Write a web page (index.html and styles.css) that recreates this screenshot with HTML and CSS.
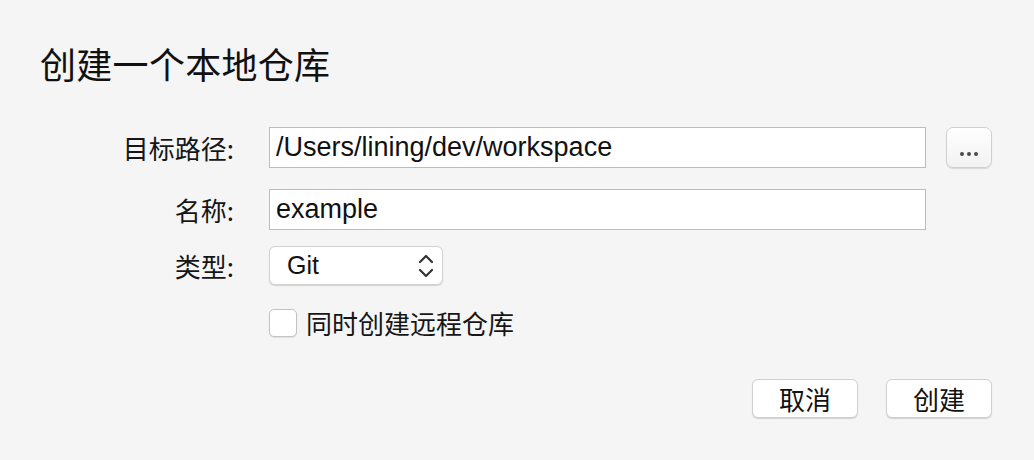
FILE: index.html
```html
<!DOCTYPE html>
<html lang="zh-CN">
<head>
<meta charset="utf-8">
<title>创建一个本地仓库</title>
<link rel="stylesheet" href="styles.css">
</head>
<body>
<div class="dialog">
  <h1 class="title">创建一个本地仓库</h1>
  <div class="form">
    <label class="label row1">目标路径:</label>
    <div class="field row1"><span class="value">/Users/lining/dev/workspace</span></div>
    <button class="browse row1" type="button" aria-label="浏览"><span class="dot"></span><span class="dot"></span><span class="dot"></span></button>

    <label class="label row2">名称:</label>
    <div class="field row2"><span class="value">example</span></div>

    <label class="label row3">类型:</label>
    <div class="select row3">
      <span class="value">Git</span>
      <svg class="chev" width="16" height="24" viewBox="0 0 16 24"><path d="M2 8 L8 2 L14 8" fill="none" stroke="#333" stroke-width="2.2" stroke-linecap="round" stroke-linejoin="round"/><path d="M2 16 L8 22 L14 16" fill="none" stroke="#333" stroke-width="2.2" stroke-linecap="round" stroke-linejoin="round"/></svg>
    </div>

    <div class="check row4">
      <span class="box"></span>
      <span class="check-label">同时创建远程仓库</span>
    </div>
  </div>
  <div class="actions">
    <button class="btn" type="button">取消</button>
    <button class="btn" type="button">创建</button>
  </div>
</div>
</body>
</html>
```
FILE: styles.css
```css
html, body {
  margin: 0;
  padding: 0;
  background: #f5f5f5;
}
body {
  font-family: "Liberation Sans", "Noto Sans CJK SC", sans-serif;
  color: #1a1a1a;
  width: 1034px;
  height: 460px;
  overflow: hidden;
}
.dialog {
  padding: 38px 0 0 40px;
}
.title {
  margin: 0;
  font-family: "Noto Sans CJK SC", sans-serif;
  font-weight: 400;
  font-size: 36px;
  line-height: 50px;
  letter-spacing: 0.3px;
  color: #111;
}
.form {
  display: grid;
  grid-template-columns: 194px 657px 46px;
  column-gap: 35px;
  margin-top: 39px;
  align-items: center;
}
.form .browse { margin-left: -15px; }
.label {
  grid-column: 1;
  justify-self: end;
  font-family: "Noto Sans CJK SC", sans-serif;
  font-size: 26px;
  line-height: 30px;
  color: #161616;
}
.row1 { grid-row: 1; }
.row2 { grid-row: 2; margin-top: 21px; }
.row3 { grid-row: 3; margin-top: 16px; }
.row4 { grid-row: 4; margin-top: 25px; }
.field {
  grid-column: 2;
  box-sizing: border-box;
  height: 41px;
  background: #fff;
  border: 1px solid #bcbcbc;
  display: flex;
  align-items: center;
  padding-left: 6px;
  font-size: 27px;
  color: #111;
}
.browse {
  grid-column: 3;
  box-sizing: border-box;
  width: 46px;
  height: 41px;
  border: 1px solid #d0d0d0;
  border-radius: 7px;
  background: linear-gradient(#ffffff, #f2f2f2);
  box-shadow: 0 1px 1px rgba(0,0,0,0.12);
  display: flex;
  justify-content: center;
  align-items: flex-end;
  gap: 3px;
  padding: 0 0 11px;
}
.dot {
  width: 4px;
  height: 4px;
  border-radius: 50%;
  background: #4a4a4a;
}
.select {
  grid-column: 2;
  justify-self: start;
  box-sizing: border-box;
  width: 174px;
  height: 39px;
  background: #fff;
  border: 1px solid #d2d2d2;
  border-radius: 6px;
  box-shadow: 0 1px 1px rgba(0,0,0,0.15);
  display: flex;
  align-items: center;
  justify-content: space-between;
  padding: 0 8px 0 17px;
  font-size: 25px;
  color: #111;
}
.chev { display: block; }
.check {
  grid-column: 2;
  display: flex;
  align-items: center;
  gap: 9px;
  height: 30px;
}
.row4.check { margin-top: 23px; }
.box {
  box-sizing: border-box;
  width: 28px;
  height: 28px;
  background: #fff;
  border: 1px solid #c2c2c2;
  border-radius: 5px;
  box-shadow: 0 1px 1px rgba(0,0,0,0.08);
}
.check-label {
  font-family: "Noto Sans CJK SC", sans-serif;
  font-size: 26px;
  line-height: 30px;
  color: #161616;
}
.actions {
  display: flex;
  justify-content: flex-end;
  gap: 28px;
  margin-top: 41px;
  padding-right: 42px;
}
.btn {
  box-sizing: border-box;
  width: 106px;
  height: 39px;
  background: #fff;
  border: 1px solid #d0d0d0;
  border-radius: 6px;
  box-shadow: 0 1px 1px rgba(0,0,0,0.15);
  font-family: "Noto Sans CJK SC", sans-serif;
  font-size: 26px;
  color: #111;
  padding: 0;
  line-height: 1;
}
```
